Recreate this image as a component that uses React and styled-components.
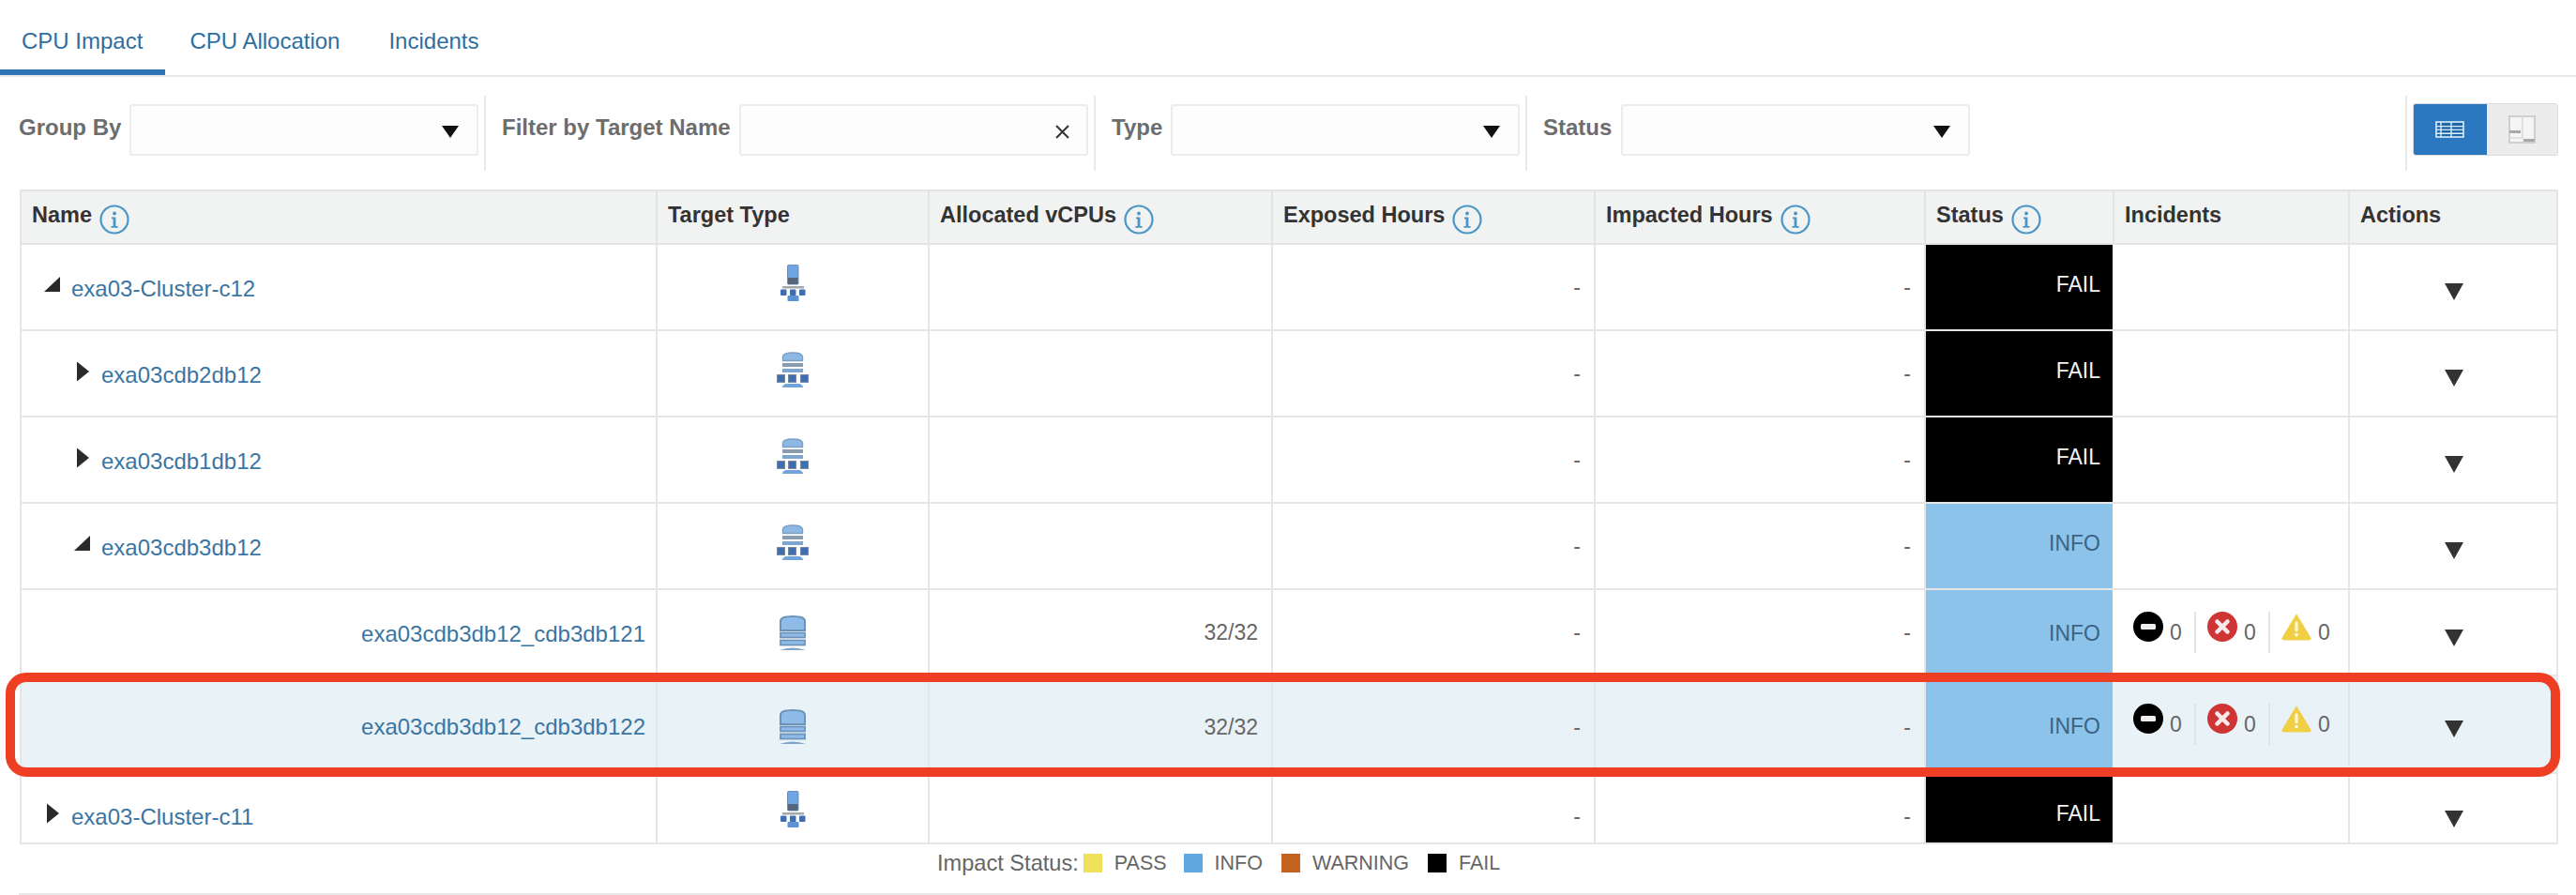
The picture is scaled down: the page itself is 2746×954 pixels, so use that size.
import React from "react";
import styled, { createGlobalStyle, css } from "styled-components";

const Global = createGlobalStyle`
  html, body { margin: 0; padding: 0; background: #fff; }
  body { font-family: "Liberation Sans", Arial, sans-serif; width: 2746px; height: 954px; overflow: hidden; }
`;

/* Moves a vertically centred cell's content by dy px while its background still fills the cell. */
const shift = dy => css`
  ${dy > 0 ? `padding-top: ${dy * 2}px;` : ""}
  ${dy < 0 ? `padding-bottom: ${-dy * 2}px;` : ""}
`;

const Page = styled.div`
  width: 2746px;
  height: 954px;
  display: flex;
  flex-direction: column;
  color: #333;
`;

const Tabs = styled.nav`
  height: 80px;
  border-bottom: 2px solid #e8e8e8;
  display: flex;
  flex: none;
`;
const Tab = styled.a`
  height: 80px;
  box-sizing: border-box;
  padding: 30px ${p => p.$pr}px 0 ${p => p.$pl}px;
  font-size: 24px;
  line-height: 27px;
  color: #2f6f9f;
  border-bottom: ${p => (p.$active ? "6px solid #2f74b5" : "6px solid transparent")};
`;

const FilterBar = styled.div`
  height: 120px;
  flex: none;
  display: flex;
  align-items: flex-start;
  padding-top: 20px;
  box-sizing: border-box;
`;
const FilterGroup = styled.div`
  width: ${p => p.$w}px;
  height: 80px;
  flex: none;
  box-sizing: border-box;
  display: flex;
  align-items: flex-start;
  padding: 9px 0 0 ${p => p.$pl}px;
  border-right: 2px solid #e9e9e9;
`;
const FilterLabel = styled.label`
  font-size: 24px;
  font-weight: 700;
  color: #6b6d6f;
  line-height: 50px;
  margin-right: ${p => p.$mr}px;
  white-space: nowrap;
`;
const Field = styled.div`
  width: ${p => p.$w}px;
  height: 55px;
  box-sizing: border-box;
  border: 2px solid #ececec;
  border-radius: 3px;
  background: #fdfdfd;
  display: flex;
  align-items: center;
  justify-content: flex-end;
  padding-right: ${p => p.$pr}px;
`;
const ClearMark = styled.svg`
  width: 15px;
  height: 15px;
  margin-top: 4px;
`;
const ToolSlot = styled.div`
  flex: 1;
  height: 80px;
  display: flex;
  justify-content: flex-end;
  padding: 8px 19px 0 0;
  box-sizing: border-box;
`;
const Toggle = styled.div`
  display: flex;
  height: 56px;
  width: 155px;
  border-radius: 3px;
  overflow: hidden;
  border: 1px solid #dcdcdc;
  box-sizing: border-box;
`;
const ToggleButton = styled.div`
  display: flex;
  align-items: center;
  justify-content: center;
  width: ${p => p.$w}px;
  background: ${p => (p.$on ? "#2b78c0" : "#ececec")};
`;

const Table = styled.div`
  width: 2706px;
  margin-left: 21px;
  flex: none;
  border-left: 2px solid #e6e6e6;
  border-right: 2px solid #e6e6e6;
  box-sizing: border-box;
`;
const columns = "676px 290px 366px 344px 352px 201px 251px 224px";
const HeadRow = styled.div`
  display: grid;
  grid-template-columns: ${columns};
  height: 59px;
  box-sizing: border-box;
  background: #f1f2f2;
  border-top: 2px solid #e4e4e4;
  border-bottom: 2px solid #e4e4e4;
`;
const HeadCell = styled.div`
  display: flex;
  align-items: center;
  gap: 8px;
  padding-left: 11px;
  font-size: 23.5px;
  font-weight: 700;
  color: #333;
  border-left: ${p => (p.$first ? "none" : "2px solid #e4e4e4")};
  white-space: nowrap;
`;
const HeadLabel = styled.span`
  position: relative;
  top: -2px;
`;
const InfoCircle = styled.svg`
  width: 32px;
  height: 32px;
  flex: none;
  position: relative;
  top: 2px;
`;
const Row = styled.div`
  display: grid;
  grid-template-columns: ${columns};
  height: ${p => p.$h}px;
  box-sizing: border-box;
  position: relative;
  border-bottom: 2px solid #e6e6e6;
  background: ${p => (p.$selected ? "#e8f2f7" : "#fff")};
`;
const Cell = styled.div`
  display: flex;
  align-items: center;
  box-sizing: border-box;
  justify-content: ${p => p.$justify || "flex-end"};
  padding: ${p => p.$pad || "0 14px 0 0"};
  border-left: ${p => (p.$first ? "none" : "2px solid #e6e6e6")};
  font-size: 23px;
  color: #666;
  min-width: 0;
  ${p => shift(p.$dy || 0)}
`;
const NameCell = styled(Cell)`
  justify-content: ${p => (p.$leaf ? "flex-end" : "flex-start")};
  padding-left: ${p => (p.$leaf ? 0 : p.$indent)}px;
  padding-right: ${p => (p.$leaf ? 11 : 0)}px;
`;
const NameLink = styled.a`
  color: #3a75a3;
  font-size: 24px;
  white-space: nowrap;
`;
const Twist = styled.svg`
  width: ${p => p.$w}px;
  height: 24px;
  flex: none;
  margin-right: ${p => p.$mr}px;
  position: relative;
  top: -4px;
`;
const StatusCell = styled.div`
  display: flex;
  align-items: center;
  justify-content: flex-end;
  box-sizing: border-box;
  padding-right: 13px;
  font-size: 23px;
  background: ${p => (p.$fail ? "#000" : "#8bc3ea")};
  color: ${p => (p.$fail ? "#f2f2f2" : "#3b6383")};
  border-left: 2px solid #e6e6e6;
  ${p => shift(p.$dy || 0)}
`;
const IncidentCell = styled.div`
  display: flex;
  align-items: center;
  padding-left: 22px;
`;
const IncidentItem = styled.div`
  display: flex;
  align-items: center;
  gap: 7px;
  height: 44px;
  width: ${p => p.$w}px;
  border-right: ${p => (p.$last ? "none" : "2px solid #e4e4e4")};
  margin-right: 12px;
  font-size: 23px;
  color: #666;
  svg { position: relative; top: -6px; flex: none; }
`;
const Caret = styled.svg`
  width: 20px;
  height: 19px;
  position: relative;
  top: 4px;
`;
const SelectCaret = styled.svg`
  width: 18px;
  height: 13px;
  margin-top: 4px;
`;
const Highlight = styled.div`
  position: absolute;
  left: -17px;
  right: -4px;
  top: -4px;
  height: 111px;
  box-sizing: border-box;
  border: 10px solid #ee3f24;
  border-radius: 22px;
  pointer-events: none;
  z-index: 2;
`;
const Legend = styled.div`
  display: flex;
  align-items: center;
  height: 40px;
  padding-left: 999px;
  font-size: 23.6px;
  color: #666;
  flex: none;
`;
const LegendTitle = styled.span`
  margin-right: 5px;
`;
const Swatch = styled.i`
  width: 20px;
  height: 20px;
  background: ${p => p.$c};
  margin-right: 13px;
`;
const LegendText = styled.span`
  margin-right: ${p => p.$mr}px;
  font-size: 21.5px;
`;
const BottomRule = styled.div`
  width: 2707px;
  margin-left: 20px;
  height: 2px;
  margin-top: 12px;
  background: #e8e8e8;
  flex: none;
`;

const Info = () => (
  <InfoCircle viewBox="0 0 32 32">
    <circle cx="16" cy="16" r="14.5" fill="none" stroke="#4a96c6" strokeWidth="2.2" />
    <circle cx="16" cy="9.5" r="1.9" fill="#4a96c6" />
    <path d="M13 13.5h4.4v9.5h2.2v1.7h-7.2V23h2.2v-7.8H13z" fill="#4a96c6" />
  </InfoCircle>
);

const CaretDown = () => (
  <Caret viewBox="0 0 20 19"><path d="M0 1h20L10 19z" fill="#333" /></Caret>
);
const SmallCaret = () => (
  <SelectCaret viewBox="0 0 18 13"><path d="M0 0h18L9 13z" fill="#111" /></SelectCaret>
);

const ClusterIcon = () => (
  <svg width="27" height="39" viewBox="0 0 27 39">
    <rect x="7.5" y="0.5" width="11.5" height="20.5" rx="1" fill="#6ea5e2" stroke="#6f8fb5" />
    <rect x="8" y="14" width="10.5" height="7" fill="#55657a" />
    <rect x="2" y="23" width="23" height="2.5" fill="#a3a8ad" />
    <rect x="0" y="26.5" width="6.5" height="6.5" rx="1" fill="#3f6fb0" />
    <rect x="10" y="26.5" width="6.5" height="6.5" rx="1" fill="#3f6fb0" />
    <rect x="20" y="26.5" width="6.5" height="6.5" rx="1" fill="#3f6fb0" />
    <rect x="7.5" y="33" width="12" height="6" rx="1" fill="#5b93d4" />
  </svg>
);
const RackIcon = () => (
  <svg width="34" height="38" viewBox="0 0 34 38">
    <path d="M6.5 5.5q0-4.5 10.5-4.5t10.5 4.5v4h-21z" fill="#8db8e4" stroke="#7ca0c4" strokeWidth="1.4" />
    <rect x="6" y="12" width="22" height="4" fill="#8a9db0" />
    <rect x="6" y="18" width="22" height="4" fill="#7ca5cf" />
    <rect x="0.5" y="24.5" width="8" height="8" fill="#3e6fb3" stroke="#7a8a9c" />
    <rect x="12.5" y="24.5" width="8" height="8" fill="#3e6fb3" stroke="#7a8a9c" />
    <rect x="25.5" y="24.5" width="8" height="8" fill="#3e6fb3" stroke="#7a8a9c" />
    <path d="M6 38q0-3 4-4h14q4 1 4 4z" fill="#6ea3dc" />
  </svg>
);
const DbIcon = () => (
  <svg width="30" height="40" viewBox="0 0 30 40">
    <path d="M2 8q0-5 13-5t13 5v10H2z" fill="#8fbbe8" stroke="#6d94b8" strokeWidth="2" />
    <rect x="2" y="20.5" width="26" height="5" fill="#8fbbe8" stroke="#6d94b8" strokeWidth="1.8" />
    <rect x="2" y="28.5" width="26" height="5" fill="#8fbbe8" stroke="#6d94b8" strokeWidth="1.8" />
    <path d="M1 39q14-5 28 0z" fill="#7ea4c6" />
  </svg>
);

const Twisty = ({ open, w, mr }) =>
  open ? (
    <Twist $w={w} $mr={mr} viewBox="0 0 17 24"><path d="M17 3v16H0z" fill="#2a2a2a" /></Twist>
  ) : (
    <Twist $w={w} $mr={mr} viewBox="0 0 13 24"><path d="M0 1.5l13 10.5L0 22.5z" fill="#2a2a2a" /></Twist>
  );

const Incidents = () => (
  <IncidentCell>
    <IncidentItem $w={66}>
      <svg width="32" height="32" viewBox="0 0 32 32">
        <circle cx="16" cy="16" r="16" fill="#000" />
        <rect x="8" y="13" width="16" height="6" rx="1.5" fill="#eee" />
      </svg>
      0
    </IncidentItem>
    <IncidentItem $w={66}>
      <svg width="32" height="32" viewBox="0 0 32 32">
        <circle cx="16" cy="16" r="16" fill="#cf3535" />
        <path d="M10.5 10.5l11 11M21.5 10.5l-11 11" stroke="#f6eaea" strokeWidth="4.5" strokeLinecap="round" />
      </svg>
      0
    </IncidentItem>
    <IncidentItem $w={60} $last>
      <svg width="32" height="30" viewBox="0 0 32 30">
        <path d="M16 2L31 27q1 2-2 2H3q-3 0-2-2z" fill="#f1cf45" stroke="#f1cf45" strokeLinejoin="round" />
        <rect x="14.4" y="9.5" width="3.2" height="10.5" rx="1" fill="#fff7d8" />
        <circle cx="16" cy="23.5" r="1.9" fill="#fff7d8" />
      </svg>
      0
    </IncidentItem>
  </IncidentCell>
);

const rows = [
  { name: "exa03-Cluster-c12", indent: 24, open: true, tw: 17, mr: 12, icon: <ClusterIcon />, h: 92, st: "FAIL", dyName: 2, dyIcon: -4.5, dyText: 0, dyStatus: -3, dyCaret: 0 },
  { name: "exa03cdb2db12", indent: 59, tw: 13, mr: 13, icon: <RackIcon />, h: 92, st: "FAIL", dyName: 2, dyIcon: -4.5, dyText: 0, dyStatus: -3, dyCaret: 0 },
  { name: "exa03cdb1db12", indent: 59, tw: 13, mr: 13, icon: <RackIcon />, h: 92, st: "FAIL", dyName: 2, dyIcon: -4.5, dyText: 0, dyStatus: -3, dyCaret: 0 },
  { name: "exa03cdb3db12", indent: 56, open: true, tw: 17, mr: 12, icon: <RackIcon />, h: 92, st: "INFO", dyName: 2, dyIcon: -4.5, dyText: 0, dyStatus: -3, dyCaret: 0 },
  { name: "exa03cdb3db12_cdb3db121", leaf: true, icon: <DbIcon />, alloc: "32/32", inc: true, h: 92, st: "INFO", dyName: 2, dyIcon: 0, dyText: 0, dyStatus: 1, dyCaret: 1 },
  { name: "exa03cdb3db12_cdb3db122", leaf: true, icon: <DbIcon />, alloc: "32/32", inc: true, h: 104, st: "INFO", selected: true, dyName: 3, dyIcon: 2, dyText: 3, dyStatus: 2, dyCaret: 0 },
  { name: "exa03-Cluster-c11", indent: 27, tw: 13, mr: 13, icon: <ClusterIcon />, h: 75, st: "FAIL", dyName: 9, dyIcon: 1, dyText: 9, dyStatus: 6, dyCaret: 7 },
];

const heads = [
  ["Name", true], ["Target Type"], ["Allocated vCPUs", true], ["Exposed Hours", true],
  ["Impacted Hours", true], ["Status", true], ["Incidents"], ["Actions"],
];

export default function App() {
  return (
    <Page>
      <Global />
      <Tabs>
        <Tab $active $pl={23} $pr={24}>CPU Impact</Tab>
        <Tab $pl={26} $pr={26}>CPU Allocation</Tab>
        <Tab $pl={26} $pr={0}>Incidents</Tab>
      </Tabs>
      <FilterBar>
        <FilterGroup $w={518} $pl={20}>
          <FilterLabel $mr={9}>Group By</FilterLabel>
          <Field $w={372} $pr={19}><SmallCaret /></Field>
        </FilterGroup>
        <FilterGroup $w={650} $pl={17}>
          <FilterLabel $mr={9}>Filter by Target Name</FilterLabel>
          <Field $w={372} $pr={18}>
            <ClearMark viewBox="0 0 15 15">
              <path d="M1 1l13 13M14 1L1 14" stroke="#333" strokeWidth="2" />
            </ClearMark>
          </Field>
        </FilterGroup>
        <FilterGroup $w={460} $pl={17}>
          <FilterLabel $mr={9}>Type</FilterLabel>
          <Field $w={372} $pr={19}><SmallCaret /></Field>
        </FilterGroup>
        <FilterGroup $w={938} $pl={17}>
          <FilterLabel $mr={10}>Status</FilterLabel>
          <Field $w={372} $pr={19}><SmallCaret /></Field>
        </FilterGroup>
        <ToolSlot>
          <Toggle>
            <ToggleButton $w={79} $on>
              <svg width="31" height="18" viewBox="0 0 31 18">
                <rect x="1" y="1" width="29" height="16" fill="#1f65a8" stroke="#d8effa" strokeWidth="1.6" />
                <path d="M1 5.6h29M1 9.4h29M1 13.2h29M6 1v16M17 1v16" stroke="#d8effa" strokeWidth="1.4" />
              </svg>
            </ToggleButton>
            <ToggleButton $w={76}>
              <svg width="29" height="30" viewBox="0 0 29 30">
                <path d="M1 1h27v28H1z" fill="#f5f5f5" stroke="#cfcfcf" strokeWidth="2" />
                <path d="M15 1v24M1 24h13" stroke="#dadada" strokeWidth="1.6" />
                <rect x="1" y="16" width="12" height="3" fill="#a8a8a8" />
                <rect x="16" y="25" width="12" height="3" fill="#a8a8a8" />
              </svg>
            </ToggleButton>
          </Toggle>
        </ToolSlot>
      </FilterBar>
      <Table>
        <HeadRow>
          {heads.map(([t, info], i) => (
            <HeadCell key={t} $first={i === 0}>
              <HeadLabel>{t}</HeadLabel>
              {info && <Info />}
            </HeadCell>
          ))}
        </HeadRow>
        {rows.map(r => (
          <Row key={r.name} $h={r.h} $selected={r.selected}>
            <NameCell $first $leaf={r.leaf} $indent={r.indent} $dy={r.dyName}>
              {!r.leaf && <Twisty open={r.open} w={r.tw} mr={r.mr} />}
              <NameLink>{r.name}</NameLink>
            </NameCell>
            <Cell $justify="center" $pad="0" $dy={r.dyIcon}>{r.icon}</Cell>
            <Cell $dy={r.dyText}>{r.alloc || ""}</Cell>
            <Cell $dy={r.dyText}>-</Cell>
            <Cell $dy={r.dyText}>-</Cell>
            <StatusCell $fail={r.st === "FAIL"} $dy={r.dyStatus}>{r.st}</StatusCell>
            {r.inc ? <Incidents /> : <div />}
            <Cell $justify="center" $pad="0" $dy={r.dyCaret}><CaretDown /></Cell>
            {r.selected && <Highlight />}
          </Row>
        ))}
      </Table>
      <Legend>
        <LegendTitle>Impact Status:</LegendTitle>
        <Swatch $c="#f0e15c" />
        <LegendText $mr={18}>PASS</LegendText>
        <Swatch $c="#5fa9e0" />
        <LegendText $mr={20}>INFO</LegendText>
        <Swatch $c="#c4621f" />
        <LegendText $mr={20}>WARNING</LegendText>
        <Swatch $c="#000" />
        <LegendText $mr={0}>FAIL</LegendText>
      </Legend>
      <BottomRule />
    </Page>
  );
}
